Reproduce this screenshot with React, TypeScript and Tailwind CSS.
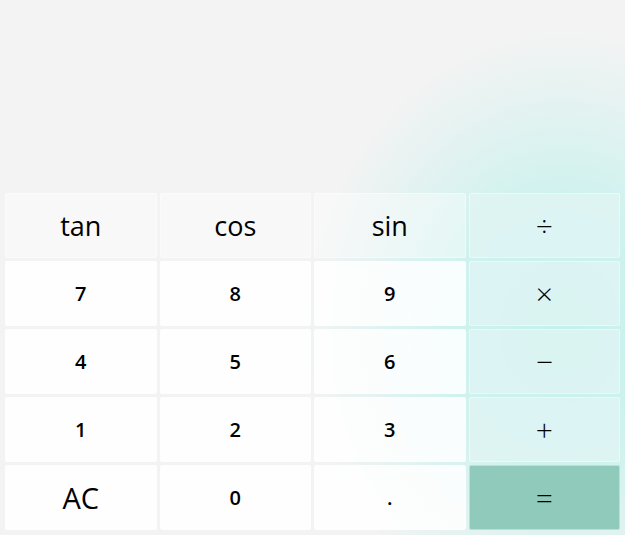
const rows: { label: string; kind: "fn" | "num" | "op" | "eq" | "big" }[][] = [
  [
    { label: "tan", kind: "fn" },
    { label: "cos", kind: "fn" },
    { label: "sin", kind: "fn" },
    { label: "÷", kind: "op" },
  ],
  [
    { label: "7", kind: "num" },
    { label: "8", kind: "num" },
    { label: "9", kind: "num" },
    { label: "×", kind: "op" },
  ],
  [
    { label: "4", kind: "num" },
    { label: "5", kind: "num" },
    { label: "6", kind: "num" },
    { label: "−", kind: "op" },
  ],
  [
    { label: "1", kind: "num" },
    { label: "2", kind: "num" },
    { label: "3", kind: "num" },
    { label: "+", kind: "op" },
  ],
  [
    { label: "AC", kind: "big" },
    { label: "0", kind: "num" },
    { label: ".", kind: "num" },
    { label: "=", kind: "eq" },
  ],
];

const styles = {
  fn: "bg-white/40 text-[27px] font-normal",
  big: "bg-white/85 text-[29px] font-normal",
  num: "bg-white/85 text-[20px] font-semibold",
  op: "bg-[#e2f5f5]/70 text-[30px] font-extralight",
  eq: "bg-[#8fcabb] text-[30px] font-extralight",
};

const App = () => {
  return (
    <div
      className="w-[625px] h-[535px] flex flex-col bg-[#f3f3f3] bg-[radial-gradient(ellipse_55%_75%_at_90%_62%,#c4f1ec_0%,rgba(200,242,238,0.8)_35%,rgba(243,243,243,0)_75%)] text-black overflow-hidden"
      style={{ fontFamily: '"Open Sans", "Noto Sans", sans-serif' }}
    >
      <div className="h-[188px] shrink-0" />
      <div className="flex-1 grid grid-cols-4 grid-rows-5 gap-[3px] p-[5px]">
        {rows.flat().map((b, i) => (
          <button
            key={i}
            className={`flex items-center justify-center rounded-[2px] border border-white/40 leading-none ${styles[b.kind]}`}
          >
            {b.label}
          </button>
        ))}
      </div>
    </div>
  );
};

export default App;
